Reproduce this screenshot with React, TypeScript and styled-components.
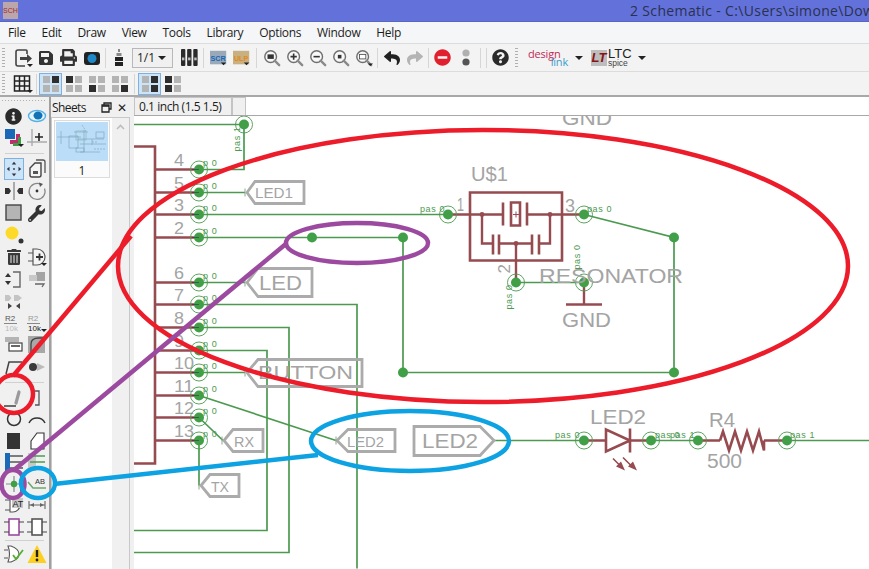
import React from 'react'
import styled, { createGlobalStyle } from 'styled-components'
import {
  FaInfoCircle,
  FaMinusCircle,
  FaPrint,
  FaQuestionCircle,
  FaReply,
  FaSave,
  FaShare,
  FaTrashAlt,
  FaWrench
} from 'react-icons/fa'

const UI_FONT = `'Open Sans', 'Noto Sans', sans-serif`
const CAD_FONT = `'Liberation Sans', Arial, sans-serif`
const WIRE = '#4c9a50'
const PART = '#964b50'
const LABEL = '#a4a4a4'

const GlobalStyle = createGlobalStyle`
  html, body {
    margin: 0;
    padding: 0;
    background: #f0f0f0;
  }
`

const Window = styled.div`
  position: relative;
  display: flex;
  flex-direction: column;
  width: 869px;
  height: 569px;
  overflow: hidden;
  background: #f0f0f0;
  font-family: ${UI_FONT};
  color: #1c1c1c;
`

const TitleBar = styled.div`
  display: flex;
  align-items: center;
  justify-content: space-between;
  flex: 0 0 22px;
  box-sizing: border-box;
  background: #6272da;
  border-bottom: 1px solid #5766c0;
  white-space: nowrap;
  overflow: hidden;
`

const AppIcon = styled.div`
  width: 15px;
  height: 17px;
  margin-left: 3px;
  background: #bba7ab;
  color: #a3282e;
  font: 7px/17px ${CAD_FONT};
  text-align: center;
`

const TitleText = styled.div`
  flex: 0 0 239px;
  font-size: 14px;
  letter-spacing: 0.35px;
  color: #2b3050;
  overflow: hidden;
`

const MenuBar = styled.div`
  display: flex;
  align-items: center;
  gap: 16px;
  flex: 0 0 21px;
  padding-left: 8px;
  background: #f5f6f7;
  font-size: 12px;
`

const MenuItem = styled.span`
  letter-spacing: -0.35px;
`

const ToolRow = styled.div<{ $height: number; $ruled?: boolean }>`
  display: flex;
  align-items: center;
  flex: 0 0 ${p => p.$height}px;
  box-sizing: border-box;
  background: #f3f3f3;
  border-top: 1px solid #dcdcdc;
  border-bottom: ${p => (p.$ruled ? '2px solid #a8a8a8' : '0')};
`

const Grip = styled.span<{ $left?: number }>`
  flex: 0 0 3px;
  height: 20px;
  margin: 0 6px 0 ${p => p.$left ?? 2}px;
  background: repeating-linear-gradient(#b0b0b0 0 1px, transparent 1px 3px);
`

const ToolButton = styled.span<{ $width?: number; $active?: boolean }>`
  display: flex;
  align-items: center;
  justify-content: center;
  flex: 0 0 ${p => p.$width ?? 23}px;
  height: 22px;
  box-sizing: border-box;
  color: #333;
  border: 1px solid ${p => (p.$active ? '#7fb0e0' : 'transparent')};
  background: ${p => (p.$active ? '#cce4f7' : 'transparent')};
`

const Separator = styled.span<{ $gap?: number }>`
  flex: 0 0 1px;
  height: 20px;
  margin: 0 ${p => p.$gap ?? 2}px;
  background: #d6d6d6;
`

const PageCombo = styled.span`
  display: flex;
  align-items: center;
  justify-content: space-between;
  box-sizing: border-box;
  width: 41px;
  height: 20px;
  margin: 0 5px 0 2px;
  padding: 0 6px 0 4px;
  border: 1px solid #b8b8b8;
  background: #f0f0f0;
  font-size: 12px;
`

const Caret = styled.span<{ $left?: number }>`
  width: 0;
  height: 0;
  margin-left: ${p => p.$left ?? 0}px;
  border-left: 4px solid transparent;
  border-right: 4px solid transparent;
  border-top: 4px solid #222;
`

const DesignLink = styled.span`
  display: flex;
  flex-direction: column;
  width: 40px;
  margin-left: 4px;
  font: 11px/8px ${UI_FONT};
  letter-spacing: -0.2px;
  color: #c22a55;
`

const LinkWord = styled.span`
  align-self: flex-end;
  color: #3a9dcc;
`

const LtLogo = styled.span`
  width: 16px;
  height: 16px;
  margin-left: 8px;
  background: #bdbdbd;
  color: #8a1414;
  font: italic bold 13px/16px ${CAD_FONT};
  text-align: center;
`

const LtWords = styled.span`
  display: flex;
  flex-direction: column;
  width: 26px;
  margin-left: 1px;
  font: 13px/11px ${CAD_FONT};
  color: #222;
`

const SpiceWord = styled.span`
  font-size: 8.5px;
  line-height: 8px;
  color: #444;
`

const Main = styled.div`
  display: flex;
  flex: 1;
  min-height: 0;
`

const Palette = styled.div`
  display: flex;
  flex-direction: column;
  flex: 0 0 51px;
  box-sizing: border-box;
  padding: 1px 0 0 2px;
  border-right: 2px solid #a0a0a0;
`

const PaletteGrip = styled.span`
  height: 1px;
  margin: 2px 2px 4px 0;
  background: repeating-linear-gradient(90deg, #b0b0b0 0 1px, transparent 1px 3px);
`

const PaletteRow = styled.div<{ $height?: number }>`
  display: grid;
  grid-template-columns: 23px 23px;
  align-items: center;
  justify-items: center;
  height: ${p => p.$height ?? 22}px;
`

const PaletteRule = styled.span<{ $space: number }>`
  display: block;
  flex: 0 0 1px;
  margin: ${p => p.$space}px 5px ${p => p.$space}px 3px;
  background: #d0d0d0;
`

const SheetsDock = styled.div`
  display: flex;
  flex-direction: column;
  flex: 0 0 79px;
  margin-right: 4px;
`

const DockHeader = styled.div`
  display: flex;
  align-items: center;
  flex: 0 0 20px;
  padding-left: 1px;
  font-size: 12px;
  letter-spacing: -0.6px;
`

const DockTitle = styled.span`
  flex: 1;
`

const DockAction = styled.span`
  display: flex;
  width: 16px;
  justify-content: center;
  color: #222;
  font-size: 12px;
`

const SheetList = styled.div`
  display: flex;
  flex: 1;
  background: #fff;
  border: 1px solid #c8c8c8;
  border-bottom: 0;
`

const SheetColumn = styled.div`
  flex: 1;
  padding: 2px;
`

const SheetCard = styled.div`
  display: flex;
  flex-direction: column;
  align-items: center;
  border: 1px solid #dcdcdc;
  background: #fbfbfb;
  font-size: 12px;
  height: 58px;
  box-sizing: border-box;
`

const SheetThumb = styled.div`
  align-self: stretch;
  height: 39px;
  margin: 1px 1px 0;
  background: #bbddf8;
`

const SheetNumber = styled.span`
  margin-top: 1px;
`

const ScrollTrack = styled.div`
  display: flex;
  flex: 0 0 17px;
  justify-content: center;
  padding-top: 6px;
  background: #f0f0f0;
`

const Workspace = styled.div`
  display: flex;
  flex-direction: column;
  flex: 1;
  min-width: 0;
`

const CoordBar = styled.div`
  display: flex;
  flex: 0 0 19px;
  box-sizing: border-box;
  background: #fff;
  border-bottom: 1px solid #a8a8a8;
`

const CoordField = styled.span<{ $width: number }>`
  display: flex;
  align-items: center;
  flex: 0 0 ${p => p.$width}px;
  box-sizing: border-box;
  padding-left: 4px;
  background: #f0f0f0;
  border: 1px solid #c4c4c4;
  border-bottom: 0;
  font-size: 12px;
  letter-spacing: -0.45px;
  white-space: nowrap;
`

const Canvas = styled.svg`
  display: block;
  flex: 1;
  width: 735px;
  background: #fff;
`

const Annotations = styled.svg`
  position: absolute;
  top: 0;
  left: 0;
  width: 869px;
  height: 569px;
  pointer-events: none;
`

const CadText = styled.text<{ $size: number }>`
  font-family: ${CAD_FONT};
  font-size: ${p => p.$size}px;
  fill: ${LABEL};
`

const PinType = styled.text`
  font-family: ${CAD_FONT};
  font-size: 9px;
  letter-spacing: 0.6px;
  fill: ${WIRE};
`

const Glyph = ({ children, size = 20 }: { children: React.ReactNode; size?: number }) => (
  <svg width={size} height={size} viewBox="0 0 20 20">
    {children}
  </svg>
)

const Drop = () => <path d="M14 16h6l-3 3z" fill="#222" />

const ImportIcon = () => (
  <Glyph>
    <path d="M14 6V3a1 1 0 0 0-1-1H5a2 2 0 0 0-2 2v12a2 2 0 0 0 2 2h7" fill="none" stroke="#444" strokeWidth="1.6" />
    <path d="M7 9h7V6l5 4.5-5 4.5v-3H7z" fill="#444" />
    <Drop />
  </Glyph>
)

const CameraIcon = () => (
  <Glyph>
    <rect x="2" y="4" width="16" height="13" rx="3" fill="#222" />
    <circle cx="10" cy="10.5" r="4.5" fill="#1e88c8" />
  </Glyph>
)

const StackIcon = () => (
  <Glyph>
    <path d="M9 1h2v3H9zM7.5 5h5v3h-5z" fill="#888" />
    <path d="M6 9h8v4H6zM6 14h8v4H6z" fill="#222" />
  </Glyph>
)

const ColumnsIcon = () => (
  <svg width="17" height="17" viewBox="0 0 18 18">
    {[0, 6.5, 13].map(x => (
      <g key={x}>
        <rect x={x} y="0" width="4.6" height="18" rx="1" fill="#2a2a2a" />
        <rect x={x + 1} y="9" width="2.6" height="3" fill="#bbb" />
      </g>
    ))}
  </svg>
)

const ScriptIcon = ({ label, box, ink }: { label: string; box: string; ink: string }) => (
  <Glyph size={18}>
    <rect x="0" y="2" width="18" height="15" fill={box} />
    <text x="9" y="13" textAnchor="middle" fontFamily={CAD_FONT} fontSize="8" fontWeight="bold" fill={ink}>
      {label}
    </text>
    <path d="M12 15h6l-3 3z" fill="#222" />
  </Glyph>
)

const ZoomIcon = ({ mark, drop }: { mark: 'fit' | 'in' | 'out' | 'dot' | 'box'; drop?: boolean }) => (
  <Glyph size={18}>
    <circle cx="8.5" cy="8.5" r="6.5" fill="#f8f8f8" stroke="#707070" strokeWidth="1.6" />
    <path d="M13 13l5 5" stroke="#8a8a8a" strokeWidth="2.6" strokeLinecap="round" />
    {mark === 'fit' && <rect x="5" y="6" width="7" height="5" fill="#333" />}
    {mark === 'in' && <path d="M5 8.5h7M8.5 5v7" stroke="#333" strokeWidth="1.8" />}
    {mark === 'out' && <path d="M5 8.5h7" stroke="#333" strokeWidth="1.8" />}
    {mark === 'dot' && <rect x="6.5" y="6.5" width="4" height="4" fill="#333" />}
    {mark === 'box' && <rect x="5" y="6" width="7" height="5" fill="#fff" stroke="#555" />}
    {drop && <Drop />}
  </Glyph>
)

const DotsIcon = () => (
  <Glyph>
    <circle cx="10" cy="5" r="3.6" fill="#b0b0b0" />
    <circle cx="10" cy="14" r="3.6" fill="#555" />
  </Glyph>
)

const GridIcon = () => (
  <Glyph>
    <path d="M1.5 2h15v15h-15zM6.5 2v15M11.5 2v15M1.5 7h15M1.5 12h15" fill="none" stroke="#222" strokeWidth="1.5" />
    <Drop />
  </Glyph>
)

// which of the four squares are dark, in reading order
const QuadIcon = ({ dark }: { dark: number[] }) => (
  <svg width="16" height="16" viewBox="0 0 16 16">
    {[0, 1, 2, 3].map(i => (
      <rect
        key={i}
        x={(i % 2) * 9}
        y={Math.floor(i / 2) * 9}
        width="7"
        height="7"
        fill={dark.includes(i) ? '#2e2e2e' : '#b4b4b4'}
      />
    ))}
  </svg>
)

const EyeIcon = () => (
  <Glyph>
    <ellipse cx="10" cy="10" rx="8.5" ry="5.5" fill="#e6f3fb" stroke="#55b0e6" strokeWidth="1.4" />
    <ellipse cx="11" cy="9.5" rx="4.5" ry="4" fill="#1272b6" />
  </Glyph>
)

const LayersIcon = () => (
  <Glyph>
    <rect x="1" y="1" width="10" height="10" fill="#1a68b8" />
    <path d="M12 6v6H6v4h10V6z" fill="#c42a70" />
    <path d="M14 9v6H9v3h8V9z" fill="#38a040" />
    <Drop />
  </Glyph>
)

const MarkIcon = () => (
  <Glyph>
    <path d="M5 1v17M0 14h20" stroke="#aaa" strokeWidth="1.4" />
    <path d="M12 5v8M8 9h8" stroke="#222" strokeWidth="1.6" />
  </Glyph>
)

const MoveIcon = () => (
  <Glyph size={18}>
    <path d="M10 2l2.5 3h-5zM10 18l2.5-3h-5zM2 10l3-2.5v5zM18 10l-3-2.5v5z" fill="#334" />
    <circle cx="10" cy="10" r="1" fill="#334" />
  </Glyph>
)

const CopyIcon = () => (
  <Glyph>
    <path d="M9 1h7a2 2 0 0 1 2 2v11" fill="none" stroke="#555" strokeWidth="1.3" />
    <path d="M8 4h6v12a2 2 0 0 1-2 2H5a2 2 0 0 1-2-2V9z" fill="#f4f4f4" stroke="#444" strokeWidth="1.4" />
    <rect x="6" y="12" width="5" height="3" fill="#555" />
  </Glyph>
)

const MirrorIcon = () => (
  <Glyph>
    <rect x="9" y="1" width="2" height="18" fill="#aaa" />
    <path d="M1 7h4l2 3-2 3H1zM19 7h-4l-2 3 2 3h4z" fill="#333" />
  </Glyph>
)

const RotateIcon = () => (
  <Glyph>
    <path d="M14 3.5a8 8 0 1 0 3.5 4" fill="none" stroke="#888" strokeWidth="1.2" />
    <circle cx="10" cy="10" r="1.4" fill="#333" />
    <path d="M12 1.5l4 1.5-3 3z" fill="#555" />
  </Glyph>
)

const GroupIcon = () => (
  <Glyph>
    <rect x="2" y="2" width="15" height="15" fill="#b4b4b4" stroke="#444" strokeWidth="1.4" />
  </Glyph>
)

const SmashIcon = () => (
  <svg width="22" height="22" viewBox="0 0 22 22">
    <circle cx="9" cy="9" r="6.5" fill="#fdd92a" />
    <circle cx="18" cy="17" r="2.5" fill="#333" />
  </svg>
)

const AddIcon = () => (
  <Glyph>
    <path d="M6 2h4a8 8 0 0 1 0 16H6z" fill="#f4f4f4" stroke="#555" strokeWidth="1.2" />
    <path d="M1 6h5M1 14h5" stroke="#555" strokeWidth="1.2" />
    <path d="M9 10h7M12.5 6.5v7" stroke="#333" strokeWidth="1.8" />
    <Drop />
  </Glyph>
)

const PinSwapIcon = () => (
  <Glyph>
    <path d="M9 3h7v15H9M12 10" fill="none" stroke="#666" strokeWidth="1.4" />
    <path d="M4 4l3 4H1zM4 16l3-4H1z" fill="#333" />
  </Glyph>
)

const ReplaceIcon = () => (
  <Glyph>
    <rect x="9" y="3" width="9" height="9" fill="#a4a4a4" />
    <rect x="2" y="6" width="8" height="6" fill="#c8c8c8" />
    <path d="M8 15h9l-2 3" fill="none" stroke="#666" strokeWidth="1.3" />
  </Glyph>
)

const GateSwapIcon = () => (
  <Glyph>
    <path d="M1 4h4l2.5 3L5 10H1zM10 4h4l4 3-4 3h-4z" fill="#c4c4c4" />
    <path d="M8 15l-4 3v-6zM12 15l4 3v-6z" fill="#444" />
  </Glyph>
)

const NameIcon = ({ value, muted, drop }: { value: string; muted: boolean; drop?: boolean }) => (
  <Glyph>
    <text x="1" y="8" fontFamily={CAD_FONT} fontSize="8" fill={muted ? '#555' : '#999'}>
      R2
    </text>
    <path d="M0 10.5h13" stroke="#888" />
    <text x="1" y="18" fontFamily={CAD_FONT} fontSize="8" fill={muted ? '#bbb' : '#222'}>
      {value}
    </text>
    {drop && <Drop />}
  </Glyph>
)

const SplitIcon = () => (
  <Glyph>
    <rect x="1" y="2" width="14" height="5" fill="#b4b4b4" />
    <rect x="5" y="8" width="13" height="8" fill="#fff" stroke="#444" strokeWidth="1.2" />
    <rect x="7" y="10" width="9" height="2" fill="#666" />
  </Glyph>
)

const BendIcon = () => (
  <Glyph>
    <rect x="1" y="1" width="17" height="17" fill="#a8a8a8" />
    <path d="M4 18V9q0-6 8-6h6" fill="none" stroke="#444" strokeWidth="1.3" />
  </Glyph>
)

const MiterIcon = () => (
  <Glyph>
    <path d="M2 17l3-12h13" fill="none" stroke="#444" strokeWidth="1.5" />
  </Glyph>
)

const ShapeIcon = () => (
  <Glyph>
    <circle cx="6" cy="10" r="4" fill="#3a3a3a" />
    <path d="M10 6l8 4-8 4z" fill="#bbb" />
  </Glyph>
)

const LineIcon = () => (
  <Glyph>
    <path d="M0 18h12" stroke="#333" strokeWidth="1.4" />
    <path d="M12 15l3-11" stroke="#9a9a9a" strokeWidth="3.2" strokeLinecap="round" />
  </Glyph>
)

const CornerIcon = () => (
  <Glyph>
    <path d="M8 3h4v14H8" fill="none" stroke="#555" strokeWidth="1.3" />
  </Glyph>
)

const CircleIcon = () => (
  <Glyph>
    <circle cx="10" cy="10" r="6.5" fill="none" stroke="#333" strokeWidth="1.5" />
  </Glyph>
)

const ArcIcon = () => (
  <Glyph>
    <path d="M2 14a9 9 0 0 1 16 0" fill="none" stroke="#333" strokeWidth="1.5" />
  </Glyph>
)

const FilledRectIcon = () => (
  <Glyph>
    <rect x="3" y="2" width="13" height="16" fill="#333" />
  </Glyph>
)

const PolygonIcon = () => (
  <Glyph>
    <path d="M4 10l6-8h7v16H4z" fill="#fff" stroke="#333" strokeWidth="1.1" />
  </Glyph>
)

const BusIcon = () => (
  <Glyph>
    <rect x="1" y="1" width="5" height="18" fill="#1a68b8" />
    <path d="M6 4h13M6 10h13M6 16h13" stroke="#555" strokeWidth="1.3" />
  </Glyph>
)

const NetIcon = () => (
  <Glyph>
    <rect x="1" y="1" width="8" height="18" fill="#c8c8c8" />
    <path d="M3 4h15M3 10h15M3 16h15" stroke="#4a9c4f" strokeWidth="1.3" />
  </Glyph>
)

const JunctionIcon = () => (
  <Glyph>
    <rect x="16" y="3" width="3" height="14" fill="#1a68b8" />
    <path d="M2 10h16M10 2v16" stroke="#888" strokeWidth="1.2" />
    <circle cx="10" cy="10" r="3.2" fill="#3da043" />
  </Glyph>
)

const LabelIcon = () => (
  <Glyph>
    <text x="8" y="10" fontFamily={CAD_FONT} fontSize="7.5" fill="#333">
      AB
    </text>
    <path d="M1 8l5 6h13" fill="none" stroke="#6aa86e" strokeWidth="1.5" />
  </Glyph>
)

const AttributeIcon = () => (
  <Glyph>
    <path d="M1 5h5M1 15h5M6 3h3a7 7 0 0 1 0 14H6z" fill="#fff" stroke="#555" strokeWidth="1.1" />
    <rect x="8" y="3" width="11" height="10" fill="#c8c8c8" />
    <text x="8.5" y="11.5" fontFamily={CAD_FONT} fontSize="9" fill="#222">
      AT
    </text>
  </Glyph>
)

const DimensionIcon = () => (
  <Glyph>
    <path d="M2 6v8M18 6v8M2 10h16" stroke="#666" strokeWidth="1.1" />
    <path d="M3 10l4-2v4zM17 10l-4-2v4z" fill="#666" />
  </Glyph>
)

const DeviceIcon = ({ colour }: { colour: string }) => (
  <Glyph>
    <rect x="5" y="2" width="10" height="16" fill="#fff" stroke={colour} strokeWidth="1.6" />
    <path d="M0 5h5M0 15h5M15 5h5M15 15h5" stroke="#444" strokeWidth="1.2" />
  </Glyph>
)

const ErcIcon = () => (
  <Glyph>
    <path d="M0 6h4M0 14h4M4 2h3q8 3 8 8t-8 8H4q3-8 0-16z" fill="#fff" stroke="#555" strokeWidth="1.1" />
    <path d="M9 11l3 4 7-9" fill="none" stroke="#52b030" strokeWidth="1.8" />
  </Glyph>
)

const WarningIcon = () => (
  <Glyph>
    <path d="M10 1l9.5 18H.5z" fill="#fdd020" />
    <path d="M10 6v7" stroke="#222" strokeWidth="2.4" />
    <circle cx="10" cy="16" r="1.4" fill="#222" />
  </Glyph>
)

const FloatIcon = () => (
  <svg width="11" height="11" viewBox="0 0 11 11">
    <path d="M3 3V1h7v6H8M1 3h7v7H1z" fill="none" stroke="#222" strokeWidth="1.3" />
    <path d="M1 4h7" stroke="#222" strokeWidth="1.6" />
  </svg>
)

const ThumbDrawing = () => (
  <svg width="52" height="39" viewBox="0 0 52 39">
    <g fill="none" stroke="#7ba2b8" strokeWidth="0.6">
      <path d="M5 9v13M1 15h24M13 14h9v12h-9zM18 10h14M22 17h26M24 22h26M24 30h20M28 8v22M36 17v6" />
      <rect x="20" y="9" width="10" height="9" stroke="#80b4b0" />
      <rect x="40" y="10" width="8" height="6" />
      <rect x="20" y="26" width="8" height="4" />
      <path d="M26 3l4 6M36 20l6 0M38 27h12" strokeDasharray="2 1" />
    </g>
  </svg>
)

const Wire = styled.path`
  fill: none;
  stroke: ${WIRE};
  stroke-width: 1.7;
`

const Lead = styled.path`
  fill: none;
  stroke: ${PART};
  stroke-width: 2.4;
`

const Symbol = styled.path`
  fill: none;
  stroke: ${PART};
  stroke-width: 2.6;
`

const Flag = styled.polygon`
  fill: none;
  stroke: #ababab;
  stroke-width: 2.8;
`

const Junction = ({ x, y, ringed = true }: { x: number; y: number; ringed?: boolean }) => (
  <g>
    <circle cx={x} cy={y} r={5} fill="#41a047" />
    {ringed && <circle cx={x} cy={y} r={8.5} fill="none" stroke={WIRE} strokeWidth="0.9" />}
  </g>
)

// the drawing's vector font is wider than Arial, so labels are stretched to their measured width
const Stretched = ({ size, x, y, width, children }: { size: number; x: number; y: number; width: number; children: string }) => (
  <CadText $size={size} x={x} y={y} textLength={width} lengthAdjust="spacingAndGlyphs">
    {children}
  </CadText>
)

const headerPins = [
  { n: '4', y: 170 },
  { n: '5', y: 193 },
  { n: '3', y: 215 },
  { n: '2', y: 238 },
  { n: '6', y: 283 },
  { n: '7', y: 305 },
  { n: '8', y: 328 },
  { n: '9', y: 351 },
  { n: '10', y: 373 },
  { n: '11', y: 396 },
  { n: '12', y: 418 },
  { n: '13', y: 441 }
]

const netLabels = [
  { text: 'LED1', points: '247,193 255,182 304,182 304,204 255,204', x: 255, y: 198, width: 38, size: 15 },
  { text: 'LED', points: '247,283 258,269 312,269 312,297 258,297', x: 259, y: 290, width: 43, size: 20 },
  { text: 'BUTTON', points: '247,373 258,360 362,360 362,387 258,387', x: 258, y: 379, width: 95, size: 18 },
  { text: 'LED2', points: '337,441 348,430 395,430 395,452 348,452', x: 347, y: 447, width: 37, size: 14 },
  { text: 'RX', points: '224,441 233,430 263,430 263,452 233,452', x: 234, y: 447, width: 20, size: 14 },
  { text: 'TX', points: '201,486 210,475 239,475 239,497 210,497', x: 211, y: 492, width: 18, size: 14 },
  { text: 'LED2', points: '414,427 480,427 494,441 480,456 414,456', x: 422, y: 448, width: 56, size: 21 }
]

const Schematic = () => (
  <Canvas viewBox="134 117 735 452">
    <Stretched size={20} x={562} y={125} width={50}>
      GND
    </Stretched>

    <Wire d="M134 125H244V170H199" />
    <Wire d="M199 193H245M199 215H448M199 283H245M199 373H245" />
    <Wire d="M199 238H403V373H674V238L584 215" />
    <Wire d="M199 305H357V569" />
    <Wire d="M199 328H289V553H134" />
    <Wire d="M199 351H267V531H134" />
    <Wire d="M199 396L336 441M199 418L223 441M199 441V486" />
    <Wire d="M494 441H584M651 441H698M787 441H869M516 283H584" />

    <Symbol d="M134 147H155V464H134" />
    <Symbol d="M470 193H562V261H470Z" />
    <Symbol d="M503 203V226M527 203V226M511 203H520V226H511ZM493 235V255M499 235V255M532 235V255M539 235V255" />
    <Symbol d="M566 305H602" />
    <Symbol d="M606 430V452L630 441ZM630 429V453" />
    <Symbol d="M720 441L723 432L729 451L735 432L741 451L747 432L753 451L759 432L764 451V441" />
    <Lead d="M448 215H503M527 215H584M482 215V244H493M499 244H532M539 244H550V215M516 244V283M584 283V305" />
    <Lead d="M584 441H606M630 441H651M698 441H720M764 441H787" />
    <path d="M513 215H519M516 212V218" stroke={PART} strokeWidth="1" />
    <circle cx={482} cy={215} r={2.4} fill={PART} />
    <circle cx={550} cy={215} r={2.4} fill={PART} />
    <circle cx={516} cy={244} r={2.4} fill={PART} />
    <path d="M613 459l9 9M623 458l9 9" stroke={PART} strokeWidth="1.6" />
    <path d="M625 471l-9-4 5-5zM637 471l-9-4 5-5z" fill={PART} />

    {headerPins.map(pin => (
      <g key={pin.n}>
        <Lead d={`M155 ${pin.y}H199`} />
        <Stretched size={16} x={174} y={pin.y - 3.5} width={pin.n.length * 10}>
          {pin.n}
        </Stretched>
        <Junction x={199} y={pin.y} />
        <path d={`M192 ${pin.y}H199`} stroke="#224" strokeWidth="1" opacity="0.5" />
        <PinType x={203} y={pin.y - 4}>
          p 0
        </PinType>
      </g>
    ))}

    {netLabels.map(label => (
      <g key={`${label.text}-${label.x}`}>
        <Flag points={label.points} />
        <Stretched size={label.size} x={label.x} y={label.y} width={label.width}>
          {label.text}
        </Stretched>
      </g>
    ))}
    <path d="M245 189v8M245 279v8M245 369v8M336 437v8M222 437v8M199 482v8" stroke="#8aa88c" strokeWidth="1" />

    <Junction x={244} y={125} />
    <Junction x={312} y={238} ringed={false} />
    <Junction x={403} y={238} ringed={false} />
    <Junction x={403} y={373} ringed={false} />
    <Junction x={674} y={238} ringed={false} />
    <Junction x={674} y={373} ringed={false} />
    <Junction x={448} y={215} />
    <Junction x={584} y={215} />
    <Junction x={516} y={283} />
    <Junction x={584} y={283} />
    <Junction x={584} y={441} />
    <Junction x={651} y={441} />
    <Junction x={698} y={441} />
    <Junction x={787} y={441} />

    <PinType transform="translate(240 152) rotate(-90)">pas 1</PinType>
    <PinType x={420} y={212}>
      pas 0
    </PinType>
    <PinType x={587} y={212}>
      pas 0
    </PinType>
    <PinType transform="translate(512 310) rotate(-90)">pas 0</PinType>
    <PinType transform="translate(580 270) rotate(-90)">pas 0</PinType>
    <PinType x={555} y={438}>
      pas 0
    </PinType>
    <PinType x={655} y={438}>
      pas 0
    </PinType>
    <PinType x={670} y={438}>
      pas 1
    </PinType>
    <PinType x={790} y={438}>
      pas 1
    </PinType>

    <Stretched size={20} x={471} y={181} width={37}>
      U$1
    </Stretched>
    <Stretched size={18} x={457} y={211} width={7}>
      1
    </Stretched>
    <Stretched size={18} x={565} y={212} width={10}>
      3
    </Stretched>
    <CadText $size={17} transform="translate(510 274) rotate(-90)">
      2
    </CadText>
    <Stretched size={20} x={539} y={283} width={144}>
      RESONATOR
    </Stretched>
    <Stretched size={20} x={562} y={327} width={49}>
      GND
    </Stretched>
    <Stretched size={20} x={590} y={424} width={56}>
      LED2
    </Stretched>
    <Stretched size={20} x={709} y={427} width={26}>
      R4
    </Stretched>
    <Stretched size={20} x={707} y={468} width={35}>
      500
    </Stretched>
  </Canvas>
)

const Callouts = () => (
  <Annotations viewBox="0 0 869 569">
    <g fill="none" strokeWidth="4.5">
      <g stroke="#ec1c2a">
        <ellipse cx={483} cy={266} rx={365} ry={136} />
        <circle cx={14} cy={394} r={19} />
        <path d="M13 376L131 236" />
      </g>
      <g stroke="#9c4aa0">
        <ellipse cx={357} cy={243} rx={71} ry={20} />
        <ellipse cx={13} cy={484} rx={11.5} ry={14} />
        <path d="M287 243L14 470" />
      </g>
      <g stroke="#0da2e2">
        <ellipse cx={410} cy={441} rx={99} ry={30} />
        <ellipse cx={38} cy={483} rx={17} ry={15} />
        <path d="M318 455L54 484" />
      </g>
    </g>
  </Annotations>
)

const paletteTop: React.ReactNode[][] = [
  [<FaInfoCircle size={17} color="#2a2a2a" />, <EyeIcon />],
  [<LayersIcon />, <MarkIcon />]
]

const paletteEdit: React.ReactNode[][] = [
  [<FaTrashAlt size={16} color="#3a3a3a" />, <AddIcon />],
  [<PinSwapIcon />, <ReplaceIcon />],
  [<GateSwapIcon />, null],
  [<NameIcon value="10k" muted />, <NameIcon value="10k" muted={false} drop />],
  [<SplitIcon />, <BendIcon />],
  [<MiterIcon />, <ShapeIcon />]
]

const paletteDraw: React.ReactNode[][] = [
  [<LineIcon />, <CornerIcon />],
  [<CircleIcon />, <ArcIcon />],
  [<FilledRectIcon />, <PolygonIcon />],
  [<BusIcon />, <NetIcon />],
  [<JunctionIcon />, <LabelIcon />],
  [<AttributeIcon />, <DimensionIcon />],
  [<DeviceIcon colour="#9c4aa0" />, <DeviceIcon colour="#555" />]
]

const renderRows = (rows: React.ReactNode[][], height?: number) =>
  rows.map((row, i) => (
    <PaletteRow key={i} $height={height}>
      {row[0]}
      {row[1]}
    </PaletteRow>
  ))

export default function App() {
  return (
    <Window>
      <GlobalStyle />
      <TitleBar>
        <AppIcon>SCH</AppIcon>
        <TitleText>2 Schematic - C:\Users\simone\Downloads</TitleText>
      </TitleBar>

      <MenuBar>
        {['File', 'Edit', 'Draw', 'View', 'Tools', 'Library', 'Options', 'Window', 'Help'].map(item => (
          <MenuItem key={item}>{item}</MenuItem>
        ))}
      </MenuBar>

      <ToolRow $height={28}>
        <Grip />
        <ToolButton>
          <ImportIcon />
        </ToolButton>
        <ToolButton>
          <FaSave size={16} />
        </ToolButton>
        <ToolButton>
          <FaPrint size={17} />
        </ToolButton>
        <ToolButton>
          <CameraIcon />
        </ToolButton>
        <Separator />
        <ToolButton $width={22}>
          <StackIcon />
        </ToolButton>
        <PageCombo>
          1/1
          <Caret />
        </PageCombo>
        <ToolButton $width={22}>
          <ColumnsIcon />
        </ToolButton>
        <Separator $gap={3} />
        <ToolButton>
          <ScriptIcon label="SCR" box="#9aa8b8" ink="#1668b8" />
        </ToolButton>
        <ToolButton>
          <ScriptIcon label="ULP" box="#c8b080" ink="#e08a20" />
        </ToolButton>
        <Separator $gap={3} />
        <ToolButton>
          <ZoomIcon mark="fit" />
        </ToolButton>
        <ToolButton>
          <ZoomIcon mark="in" />
        </ToolButton>
        <ToolButton>
          <ZoomIcon mark="out" />
        </ToolButton>
        <ToolButton>
          <ZoomIcon mark="dot" />
        </ToolButton>
        <ToolButton>
          <ZoomIcon mark="box" drop />
        </ToolButton>
        <Separator />
        <ToolButton>
          <FaReply size={16} color="#222" />
        </ToolButton>
        <ToolButton>
          <FaShare size={16} color="#b4b4b4" />
        </ToolButton>
        <Separator />
        <ToolButton>
          <FaMinusCircle size={17} color="#e0202e" />
        </ToolButton>
        <ToolButton>
          <DotsIcon />
        </ToolButton>
        <Separator $gap={3} />
        <Separator $gap={2} />
        <ToolButton>
          <FaQuestionCircle size={17} color="#2a2a2a" />
        </ToolButton>
        <Grip $left={3} />
        <DesignLink>
          design
          <LinkWord>link</LinkWord>
        </DesignLink>
        <Caret $left={7} />
        <LtLogo>LT</LtLogo>
        <LtWords>
          LTC
          <SpiceWord>spice</SpiceWord>
        </LtWords>
        <Caret $left={4} />
      </ToolRow>

      <ToolRow $height={26} $ruled>
        <Grip />
        <ToolButton>
          <GridIcon />
        </ToolButton>
        <Separator />
        <ToolButton $active>
          <QuadIcon dark={[1]} />
        </ToolButton>
        <ToolButton>
          <QuadIcon dark={[0]} />
        </ToolButton>
        <ToolButton>
          <QuadIcon dark={[2]} />
        </ToolButton>
        <ToolButton>
          <QuadIcon dark={[3]} />
        </ToolButton>
        <Separator $gap={3} />
        <ToolButton $active>
          <QuadIcon dark={[1, 3]} />
        </ToolButton>
        <ToolButton>
          <QuadIcon dark={[0, 2]} />
        </ToolButton>
      </ToolRow>

      <Main>
        <Palette>
          <PaletteGrip />
          {renderRows(paletteTop)}
          <PaletteRule $space={4} />
          <PaletteRow>
            <ToolButton $active>
              <MoveIcon />
            </ToolButton>
            <CopyIcon />
          </PaletteRow>
          <PaletteRow>
            <MirrorIcon />
            <RotateIcon />
          </PaletteRow>
          <PaletteRow>
            <GroupIcon />
            <FaWrench size={17} color="#333" />
          </PaletteRow>
          <PaletteRow>
            <SmashIcon />
          </PaletteRow>
          {renderRows(paletteEdit)}
          <PaletteRule $space={4} />
          {renderRows(paletteDraw, 21.5)}
          <PaletteRule $space={2} />
          <PaletteRow>
            <ErcIcon />
            <WarningIcon />
          </PaletteRow>
        </Palette>

        <SheetsDock>
          <DockHeader>
            <DockTitle>Sheets</DockTitle>
            <DockAction>
              <FloatIcon />
            </DockAction>
            <DockAction>✕</DockAction>
          </DockHeader>
          <SheetList>
            <SheetColumn>
              <SheetCard>
                <SheetThumb>
                  <ThumbDrawing />
                </SheetThumb>
                <SheetNumber>1</SheetNumber>
              </SheetCard>
            </SheetColumn>
            <ScrollTrack>
              <svg width="9" height="6" viewBox="0 0 9 6">
                <path d="M1 5l3.5-3.5L8 5" fill="none" stroke="#bdbdbd" strokeWidth="1.6" />
              </svg>
            </ScrollTrack>
          </SheetList>
        </SheetsDock>

        <Workspace>
          <CoordBar>
            <CoordField $width={98}>0.1 inch (1.5 1.5)</CoordField>
            <CoordField $width={14} />
          </CoordBar>
          <Schematic />
        </Workspace>
      </Main>

      <Callouts />
    </Window>
  )
}
